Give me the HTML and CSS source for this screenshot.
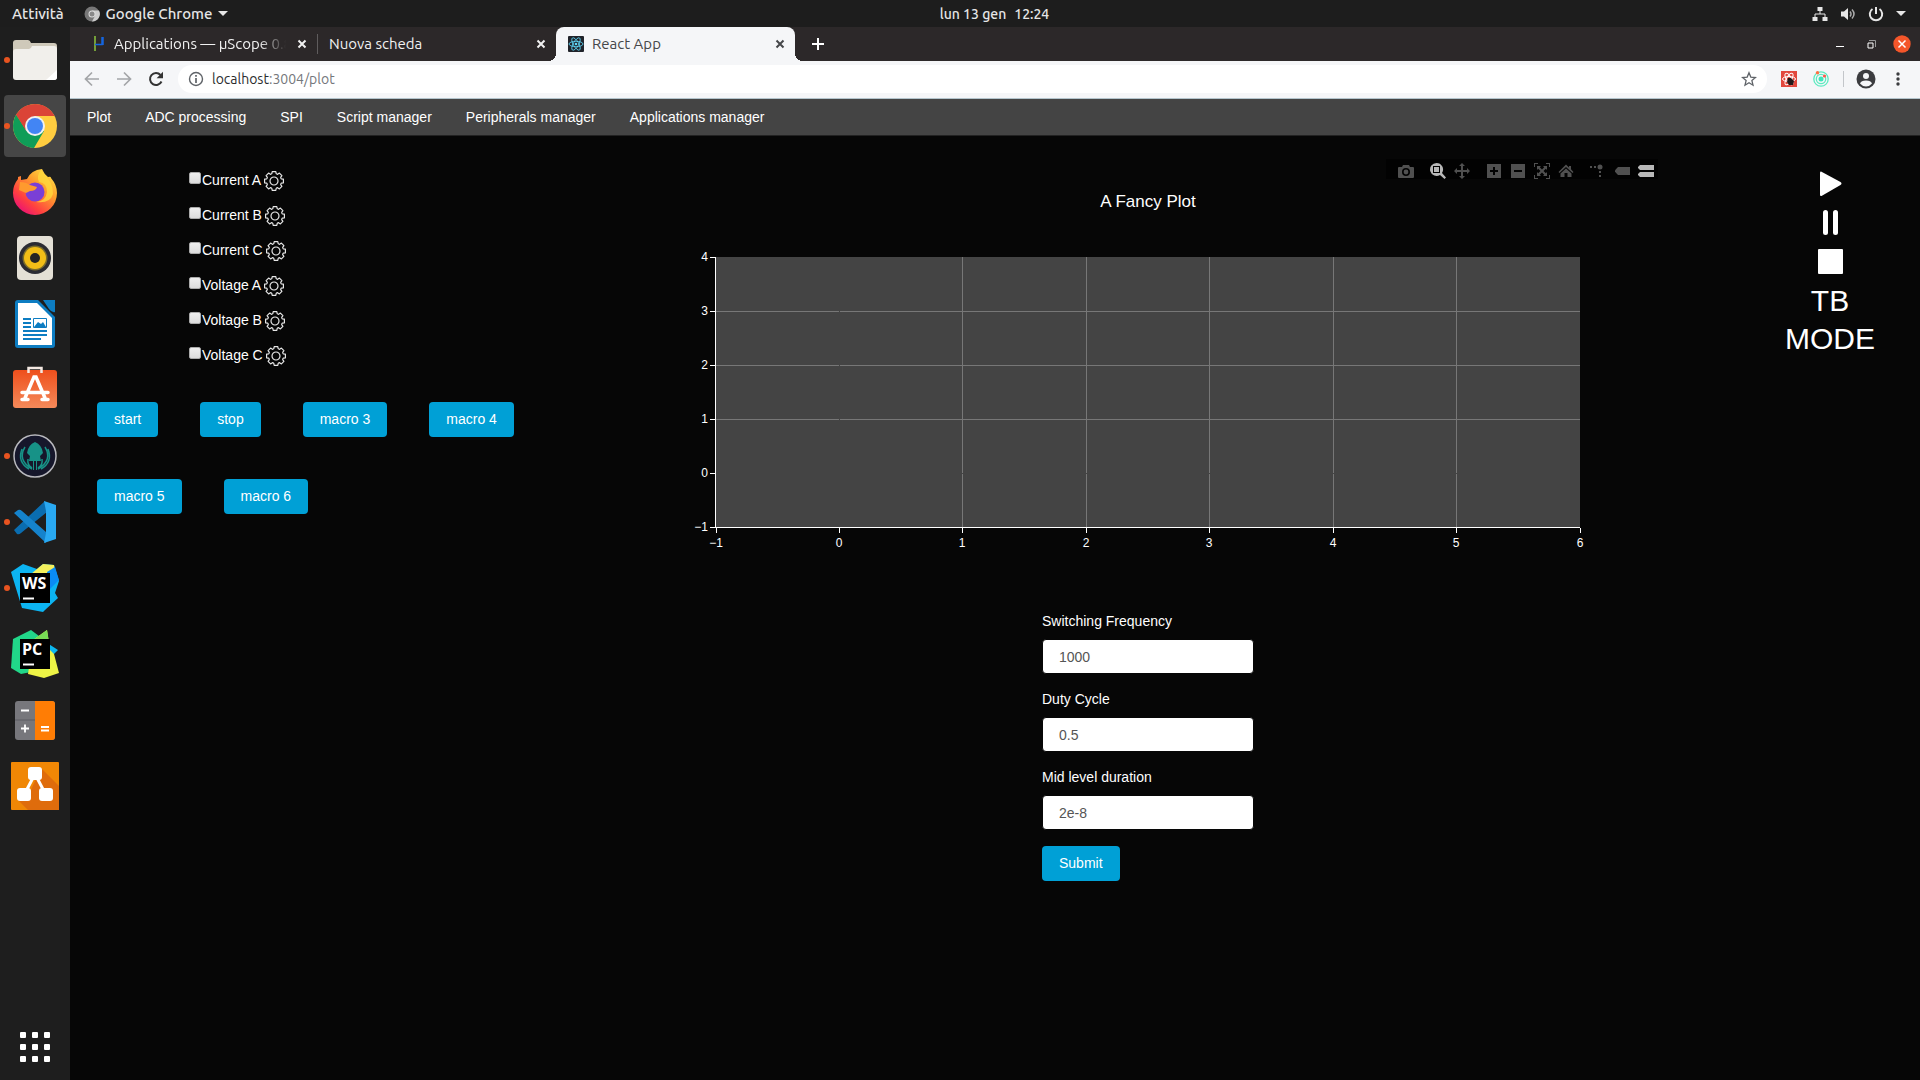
FILE: index.html
```html
<!DOCTYPE html>
<html lang="it">
<head>
<meta charset="utf-8">
<meta name="viewport" content="width=device-width, initial-scale=1">
<title>React App</title>
<link rel="stylesheet" href="styles.css">
</head>
<body>
<svg class="sprite" aria-hidden="true">
  <symbol id="gear" viewBox="-10 -10 20 20">
    <path d="M-1.8-9.4H1.8L2.2-7.3Q2.9-6.6 3.6-6.7L5.4-7.9 7.9-5.4 6.7-3.6Q6.6-2.9 7.3-2.2L9.4-1.8V1.8L7.3 2.2Q6.6 2.9 6.7 3.6L7.9 5.4 5.4 7.9 3.6 6.7Q2.9 6.6 2.2 7.3L1.8 9.4H-1.8L-2.2 7.3Q-2.9 6.6-3.6 6.7L-5.4 7.9-7.9 5.4-6.7 3.6Q-6.6 2.9-7.3 2.2L-9.4 1.8V-1.8L-7.3-2.2Q-6.6-2.9-6.7-3.6L-7.9-5.4-5.4-7.9-3.6-6.7Q-2.9-6.6-2.2-7.3Z"/>
    <circle r="4"/>
  </symbol>
  <symbol id="cross" viewBox="0 0 16 16"><path d="M4.500 4.500l7 7m0-7l-7 7"/></symbol>
</svg>

<header class="topbar">
  <div class="topbar-side">
    <button class="plain">Attività</button>
    <button class="plain app-menu">
      <svg width="16" height="16" viewBox="0 0 16 16"><circle cx="8" cy="8" r="7.500" fill="#777"/><path d="M8 4.500h7A7.500 7.500 0 0 1 8 15.500l3-5.500z" fill="#ccc"/><circle cx="8" cy="8" r="3.500" fill="#ddd"/><circle cx="8" cy="8" r="2.500" fill="#888"/></svg>
      Google Chrome
      <svg width="10" height="6" viewBox="0 0 10 6"><path d="M0 0h10L5 5z" fill="#e6e6e6"/></svg>
    </button>
  </div>
  <button class="plain clock"><span>lun 13 gen</span><span>12:24</span></button>
  <div class="topbar-side tray">
    <svg width="16" height="16" viewBox="0 0 16 16"><path d="M5.500 1h5v4h-5zM.5 11h5v4h-5zM10.500 11h5v4h-5z" fill="#e6e6e6"/><path d="M8 5v3M3 11V8h10v3" fill="none" stroke="#e6e6e6"/></svg>
    <svg width="16" height="16" viewBox="0 0 16 16"><path d="M1 5.500h3L8 2v12L4 10.500H1z" fill="#e6e6e6"/><path d="M10 5.500q2 2.500 0 5M12 3.500q4 4.500 0 9" fill="none" stroke="#aaa" stroke-width="1.500"/></svg>
    <svg width="16" height="16" viewBox="0 0 16 16"><path d="M4.500 3A6.200 6.200 0 1 0 11.500 3M8 1v7" fill="none" stroke="#e6e6e6" stroke-width="2"/></svg>
    <svg width="10" height="6" viewBox="0 0 10 6"><path d="M0 0h10L5 5z" fill="#e6e6e6"/></svg>
  </div>
</header>

<div class="desktop">
  <nav class="dock" aria-label="Dock">
    <button class="dock-item running" aria-label="File">
      <svg width="48" height="48" viewBox="0 0 48 48"><path d="M2 7q0-3 3-3h12q2 0 3 3h23q3 0 3 3v20H2z" fill="#cfc9ba"/><path d="M2 16q0-3 3-3h13q2 0 3-3h22q3 0 3 3v28q0 3-3 3H5q-3 0-3-3z" fill="#f1efeb"/><path d="M46 34v7q0 3-3 3h-8z" fill="#fff"/></svg>
    </button>
    <button class="dock-item running active" aria-label="Google Chrome">
      <svg width="48" height="48" viewBox="0 0 48 48"><circle cx="24" cy="24" r="22" fill="#ffcd40"/><path d="M24 24L5 13A22 22 0 0 1 43.500 14H24z" fill="#db4437"/><path d="M5 13A22 22 0 0 0 23 46l10-17-9-5-9 4z" fill="#0f9d58"/><path d="M5 13l10 16 9-5V14H43.500A22 22 0 0 0 5 13z" fill="#db4437"/><path d="M5 13l10 16 8 5-8-2z" fill="#0f9d58"/><path d="M5 13l10 17-6 6A22 22 0 0 1 5 13z" fill="#0f9d58"/><circle cx="24" cy="24" r="10" fill="#f1f1f1"/><circle cx="24" cy="24" r="8" fill="#4285f4"/></svg>
    </button>
    <button class="dock-item" aria-label="Firefox">
      <svg width="48" height="48" viewBox="0 0 48 48">
        <defs><linearGradient id="fx" x1="1" y1="0" x2=".2" y2="1"><stop offset="0" stop-color="#fff44f"/><stop offset=".4" stop-color="#ffa02c"/><stop offset=".75" stop-color="#ff4040"/><stop offset="1" stop-color="#e80c7c"/></linearGradient></defs>
        <path d="M31 1q2 5 6 8 3-1 3 1 6 7 6 15a22 22 0 0 1-44 0q0-8 5-14v-2l3-1v4l6-1q4-9 15-10z" fill="url(#fx)"/><circle cx="24" cy="24" r="9.500" fill="#7a3fd6"/><path d="M9 14q6 0 10 3l7 2q-1 4-7 4l-4 2-7-3z" fill="#ff9a2e"/><path d="M28 14q8 1 8 10-1 9-11 10 14 2 17-8Q43 15 30 2q-5 6-2 12z" fill="#ffd83c" opacity=".8"/></svg>
    </button>
    <button class="dock-item" aria-label="Rhythmbox">
      <svg width="48" height="48" viewBox="0 0 48 48"><rect x="6" y="2" width="36" height="44" rx="4" fill="#e4e0d6"/><circle cx="24" cy="24" r="16" fill="#2b2b33"/><circle cx="24" cy="24" r="12.500" fill="#7a6c2c"/><circle cx="24" cy="24" r="11" fill="#f2bd17"/><circle cx="24" cy="24" r="5" fill="#242424"/></svg>
    </button>
    <button class="dock-item" aria-label="LibreOffice Writer">
      <svg width="48" height="48" viewBox="0 0 48 48"><path d="M7 0h20l17 17v28q0 3-3 3H7q-3 0-3-3V3q0-3 3-3z" fill="#0d7dc2"/><path d="M7 3h19l15 15v27H7z" fill="#fff"/><path d="M32 0h12v12q-3 1-6-3z" fill="#0d7dc2"/><path d="M12 19h8M12 23h8M12 27h8M12 31h24M12 35h24M12 39h18" stroke="#0d7dc2" stroke-width="2"/><path d="M22.500 18.500h13v9h-13z" fill="#fff" stroke="#0d7dc2"/><path d="M23 27l4-5 3 2 2-2 3 5z" fill="#0d7dc2"/></svg>
    </button>
    <button class="dock-item" aria-label="Ubuntu Software">
      <svg width="48" height="48" viewBox="0 1 48 48"><defs><linearGradient id="sw" x2="0" y2="1"><stop offset="0" stop-color="#ee4f1c"/><stop offset="1" stop-color="#f58a5a"/></linearGradient></defs><rect x="2" y="5" width="44" height="38" rx="3" fill="url(#sw)"/><path d="M17.500 8V3h13v5" fill="none" stroke="#f4e9e2" stroke-width="2.500"/><path d="M14 33L23 12h2l9 21M11 27.500h26M11 34.500h6M31 34.500h6" fill="none" stroke="#fff" stroke-width="3.500" stroke-linecap="round"/></svg>
    </button>
    <button class="dock-item running" aria-label="GitKraken">
      <svg width="48" height="48" viewBox="0 0 48 48"><circle cx="24" cy="24" r="21" fill="#16172b" stroke="#b8b8bd" stroke-width="1.500"/><path d="M24 10q7 3 8 11l-3 3 1 5h-4v9h-1v-9h-2v9h-1v-9h-4l1-5-3-3q1-8 8-11z" fill="#179287"/><path d="M14 15q-8 13 7 22M34 15q8 13-7 22M11 17q-5 13 7 20M37 17q5 13-7 20M17 27q-1 6 4 9M31 27q1 6-4 9" fill="none" stroke="#179287" stroke-width="1.500"/></svg>
    </button>
    <button class="dock-item running" aria-label="Visual Studio Code">
      <svg width="48" height="48" viewBox="0 0 48 48"><path d="M34 3L3 32l3 4q2 1 4-1l26-21z" fill="#0a6db0"/><path d="M3 15l4-3q2-1 4 1l24 21v11z" fill="#1583cc"/><path d="M33 3l12 4v34l-12 4 2-10V13z" fill="#29a9f2"/></svg>
    </button>
    <button class="dock-item running" aria-label="WebStorm">
      <svg width="48" height="48" viewBox="0 0 48 48"><path d="M0 8l12-8 14 5 6-5 11 1 5 16-4 12 3 5-13 12-2 2-21-4z" fill="#0cb4f2"/><path d="M20 10l12-10 11 1 2 14-10 9z" fill="#f4f05c"/><path d="M36 8l8-5 4 13-10 10z" fill="#0a8bf5"/><rect x="9" y="9" width="30" height="30" fill="#000"/><text x="11" y="25" class="ide">WS</text><path d="M12 34.500h11" stroke="#fff" stroke-width="2"/></svg>
    </button>
    <button class="dock-item" aria-label="PyCharm">
      <svg width="48" height="48" viewBox="0 0 48 48"><path d="M2 9L20 0l12 9-2 31-20 4-10-6z" fill="#21d789"/><path d="M30 9l17 11-9 9z" fill="#0cb8f0"/><path d="M22 10l14-10 3 20 4 4 5 19-15 5-16-4z" fill="#eef446"/><path d="M22 10L36 0l2 12z" fill="#78dc55"/><rect x="9" y="9" width="30" height="30" fill="#000"/><text x="11" y="25" class="ide">PC</text><path d="M12 34.500h11" stroke="#fff" stroke-width="2"/></svg>
    </button>
    <button class="dock-item" aria-label="Calcolatrice">
      <svg width="48" height="48" viewBox="0 0 48 48"><rect x="4" y="5" width="40" height="39" rx="3" fill="#77777c"/><path d="M24 5h17q3 0 3 3v33q0 3-3 3H24z" fill="#ff7d05"/><path d="M4 24h20" stroke="#5d5d62"/><path d="M10 14.500h8M10 32.500h8M14 28.500v8M30 31h8M30 34.500h8" stroke="#fff" stroke-width="1.800"/></svg>
    </button>
    <button class="dock-item" aria-label="draw.io">
      <svg width="48" height="48" viewBox="0 0 48 48"><rect width="48" height="48" rx="1" fill="#f08705"/><path d="M30 6l18 18v24H17L7 38l12-8z" fill="#df6c0c"/><path d="M24 12L13 33M24 12l11 21" stroke="#fff" stroke-width="3"/><rect x="17" y="5" width="14" height="13" rx="3" fill="#fff"/><rect x="6" y="26" width="14" height="13" rx="3" fill="#fff"/><rect x="28" y="26" width="14" height="13" rx="3" fill="#fff"/></svg>
    </button>
    <button class="dock-item show-apps" aria-label="Mostra applicazioni">
      <svg width="30" height="30" viewBox="0 0 30 30" fill="#fff"><rect width="6" height="6" rx="1"/><rect x="12" width="6" height="6" rx="1"/><rect x="24" width="6" height="6" rx="1"/><rect y="12" width="6" height="6" rx="1"/><rect x="12" y="12" width="6" height="6" rx="1"/><rect x="24" y="12" width="6" height="6" rx="1"/><rect y="24" width="6" height="6" rx="1"/><rect x="12" y="24" width="6" height="6" rx="1"/><rect x="24" y="24" width="6" height="6" rx="1"/></svg>
    </button>
  </nav>

  <div class="browser">
    <div class="tabstrip">
      <div class="tab">
        <svg width="16" height="16" viewBox="0 0 16 16" fill="none" stroke-width="1.500"><path d="M5 0v15" stroke="#8dc63f"/><path d="M5 8.500h7V1M13 1v8" stroke="#1565e0"/></svg>
        <span class="tab-title fade">Applications — μScope 0.8</span>
        <button class="tab-close" aria-label="Chiudi"><svg width="16" height="16"><use href="#cross"/></svg></button>
      </div>
      <div class="tab divided">
        <span class="tab-title">Nuova scheda</span>
        <button class="tab-close" aria-label="Chiudi"><svg width="16" height="16"><use href="#cross"/></svg></button>
      </div>
      <div class="tab current">
        <svg width="16" height="16" viewBox="0 0 16 16"><rect width="16" height="16" rx="1" fill="#20232a"/><g fill="none" stroke="#61dafb" stroke-width=".8"><ellipse cx="8" cy="8" rx="7" ry="2.700"/><ellipse cx="8" cy="8" rx="7" ry="2.700" transform="rotate(60 8 8)"/><ellipse cx="8" cy="8" rx="7" ry="2.700" transform="rotate(120 8 8)"/></g><circle cx="8" cy="8" r="1.300" fill="#61dafb"/></svg>
        <span class="tab-title">React App</span>
        <button class="tab-close" aria-label="Chiudi"><svg width="16" height="16"><use href="#cross"/></svg></button>
      </div>
      <button class="plain new-tab" aria-label="Nuova scheda"><svg width="16" height="16" viewBox="0 0 16 16"><path d="M8 2v12M2 8h12" stroke="#fff" stroke-width="2"/></svg></button>
      <div class="window-buttons">
        <button class="plain" aria-label="Riduci"><svg width="18" height="18" viewBox="0 0 18 18"><path d="M5 11.500h8" stroke="#fff"/></svg></button>
        <button class="plain" aria-label="Ripristina"><svg width="18" height="18" viewBox="0 0 18 18" fill="none"><path d="M7 5.500h6.500V12" stroke="#999"/><path d="M6 8h5v5H6z" stroke="#fff"/></svg></button>
        <button class="plain" aria-label="Chiudi finestra"><svg width="18" height="18" viewBox="0 0 18 18"><circle cx="9" cy="9" r="8.700" fill="#f4562a"/><path d="M5.500 5.500l7 7m0-7l-7 7" stroke="#fff" stroke-width="1.500"/></svg></button>
      </div>
    </div>

    <div class="toolbar">
      <div class="history">
        <button class="plain" aria-label="Indietro"><svg width="16" height="16" viewBox="0 0 16 16" fill="none" stroke="#a3a5a8" stroke-width="1.700"><path d="M15 8H2M8 1.500L1.500 8 8 14.500"/></svg></button>
        <button class="plain" aria-label="Avanti"><svg width="16" height="16" viewBox="0 0 16 16" fill="none" stroke="#a3a5a8" stroke-width="1.700"><path d="M1 8h13M8 1.500L14.500 8 8 14.500"/></svg></button>
        <button class="plain" aria-label="Ricarica"><svg width="16" height="16" viewBox="0 0 16 16"><path d="M13.500 10.500A6 6 0 1 1 12.500 4" fill="none" stroke="#333" stroke-width="2"/><path d="M15 .8v6.400H8.600z" fill="#333"/></svg></button>
      </div>
      <div class="omnibox">
        <svg width="16" height="16" viewBox="0 0 16 16"><circle cx="8" cy="8" r="6.500" fill="none" stroke="#5f6368" stroke-width="1.400"/><path d="M8 7v5M8 4v1.700" stroke="#5f6368" stroke-width="1.700"/></svg>
        <span class="url">localhost<span class="url-rest">:3004/plot</span></span>
        <svg width="16" height="16" viewBox="0 0 16 16"><path d="M8 1.800l1.800 4.300 4.700.4-3.600 3.100 1.100 4.600L8 11.700l-4 2.500 1.100-4.600L1.500 6.500l4.700-.4z" fill="none" stroke="#5f6368" stroke-width="1.300"/></svg>
      </div>
      <div class="extensions">
        <svg width="16" height="16" viewBox="0 0 16 16"><rect width="16" height="16" fill="#e2483d"/><g fill="none" stroke="#fff"><ellipse cx="8" cy="8" rx="6.500" ry="2.500"/><ellipse cx="8" cy="8" rx="6.500" ry="2.500" transform="rotate(60 8 8)"/><ellipse cx="8" cy="8" rx="6.500" ry="2.500" transform="rotate(120 8 8)"/></g><path d="M7 7l3 0 3 3-1 4H8l-2-3z" fill="#221a1a"/></svg>
        <svg width="16" height="16" viewBox="0 0 16 16"><g fill="none" stroke="#5ceac0" stroke-width="1.300"><circle cx="8" cy="8" r="7.200"/><circle cx="8" cy="8" r="4.700"/></g><circle cx="8" cy="8" r="2.500" fill="#3fe5b8"/><circle cx="4.500" cy="1.700" r="1.700" fill="#ff7043"/><circle cx="11.500" cy="5" r="1.600" fill="#ff5a4a"/></svg>
      </div>
      <div class="profile">
        <svg width="20" height="20" viewBox="0 0 20 20"><circle cx="10" cy="10" r="9.500" fill="#3b3c3f"/><circle cx="10" cy="7" r="3" fill="#f5f6f8"/><path d="M4 14.500q1-3 6-3t6 3q-2.500 3-6 3t-6-3z" fill="#f5f6f8"/></svg>
        <svg width="16" height="16" viewBox="0 0 16 16" fill="#3b3c3f"><circle cx="8" cy="3" r="1.700"/><circle cx="8" cy="8" r="1.700"/><circle cx="8" cy="13" r="1.700"/></svg>
      </div>
    </div>

    <div class="app">
      <nav class="app-nav">
        <a href="#plot">Plot</a>
        <a href="#adc">ADC processing</a>
        <a href="#spi">SPI</a>
        <a href="#scripts">Script manager</a>
        <a href="#peripherals">Peripherals manager</a>
        <a href="#applications">Applications manager</a>
      </nav>

      <main class="panels">
        <section class="controls">
          <ul class="channels">
            <li><input type="checkbox" id="ch1"><label for="ch1">Current A</label><button class="plain" aria-label="Impostazioni Current A"><svg class="gear" width="20" height="20"><use href="#gear"/></svg></button></li>
            <li><input type="checkbox" id="ch2"><label for="ch2">Current B</label><button class="plain" aria-label="Impostazioni Current B"><svg class="gear" width="20" height="20"><use href="#gear"/></svg></button></li>
            <li><input type="checkbox" id="ch3"><label for="ch3">Current C</label><button class="plain" aria-label="Impostazioni Current C"><svg class="gear" width="20" height="20"><use href="#gear"/></svg></button></li>
            <li><input type="checkbox" id="ch4"><label for="ch4">Voltage A</label><button class="plain" aria-label="Impostazioni Voltage A"><svg class="gear" width="20" height="20"><use href="#gear"/></svg></button></li>
            <li><input type="checkbox" id="ch5"><label for="ch5">Voltage B</label><button class="plain" aria-label="Impostazioni Voltage B"><svg class="gear" width="20" height="20"><use href="#gear"/></svg></button></li>
            <li><input type="checkbox" id="ch6"><label for="ch6">Voltage C</label><button class="plain" aria-label="Impostazioni Voltage C"><svg class="gear" width="20" height="20"><use href="#gear"/></svg></button></li>
          </ul>
          <div class="macros">
            <button class="btn">start</button>
            <button class="btn">stop</button>
            <button class="btn">macro 3</button>
            <button class="btn">macro 4</button>
            <button class="btn">macro 5</button>
            <button class="btn">macro 6</button>
          </div>
        </section>

        <section class="center">
          <div class="plot">
            <svg class="chart" viewBox="0 0 1024 450" role="img" aria-label="A Fancy Plot">
              <rect x="80" y="100" width="864" height="270" fill="#444"/>
              <g class="grid">
                <path d="M80 154.500H944M80 208.500H944M80 262.500H944"/>
                <path d="M326.500 100V370M450.500 100V370M573.500 100V370M697.500 100V370M820.500 100V370"/>
              </g>
              <path class="zero" d="M80 316.500H944M203.500 100V370"/>
              <path class="axis" d="M79.500 100V371M79 370.500H944"/>
              <path class="axis" d="M74 100.500h5M74 154.500h5M74 208.500h5M74 262.500h5M74 316.500h5M74 370.500h5"/>
              <path class="axis" d="M80.500 371v5M203.500 371v5M326.500 371v5M450.500 371v5M573.500 371v5M697.500 371v5M820.500 371v5M944.500 371v5"/>
              <g class="ylabels">
                <text x="72" y="104">4</text><text x="72" y="158">3</text><text x="72" y="212">2</text><text x="72" y="266">1</text><text x="72" y="320">0</text><text x="72" y="374">−1</text>
              </g>
              <g class="xlabels">
                <text x="80" y="390">−1</text><text x="203" y="390">0</text><text x="326" y="390">1</text><text x="450" y="390">2</text><text x="573" y="390">3</text><text x="697" y="390">4</text><text x="820" y="390">5</text><text x="944" y="390">6</text>
              </g>
              <text class="title" x="512" y="50">A Fancy Plot</text>
            </svg>
            <div class="modebar">
              <div class="group">
                <button aria-label="Download plot"><svg width="16" height="16" viewBox="0 0 16 16"><path fill-rule="evenodd" d="M0 5q0-1 1-1h3l1-2h6l1 2h3q1 0 1 1v9q0 1-1 1H1q-1 0-1-1zM8 5a4 4 0 1 0 0 8 4 4 0 0 0 0-8zM8 6.600a2.400 2.400 0 1 1 0 4.800 2.400 2.400 0 0 1 0-4.800z"/></svg></button>
              </div>
              <div class="group">
                <button class="on" aria-label="Zoom"><svg width="16" height="16" viewBox="0 0 16 16"><path fill-rule="evenodd" d="M6.500 0a6.500 6.500 0 0 1 5.500 10l4 4.500-1.500 1.500-4.500-4A6.500 6.500 0 1 1 6.500 0zM3 3v7h7V3zM4 4h5v5H4z"/></svg></button>
                <button aria-label="Pan"><svg width="16" height="16" viewBox="0 0 16 16"><path d="M8 0l3 3H9v4h4V5l3 3-3 3V9H9v4h2l-3 3-3-3h2V9H3v2L0 8l3-3v2h4V3H5z"/></svg></button>
              </div>
              <div class="group">
                <button aria-label="Zoom in"><svg width="16" height="16" viewBox="0 0 16 16"><path fill-rule="evenodd" d="M1 1h14v14H1zM7 4v3H4v2h3v3h2V9h3V7H9V4z"/></svg></button>
                <button aria-label="Zoom out"><svg width="16" height="16" viewBox="0 0 16 16"><path fill-rule="evenodd" d="M1 1h14v14H1zM4 7v2h8V7z"/></svg></button>
                <button aria-label="Autoscale"><svg width="16" height="16" viewBox="0 0 16 16"><path d="M0 0h4v1H1v3H0zM12 0h4v4h-1V1h-3zM0 12h1v3h3v1H0zM15 12h1v4h-4v-1h3zM3 3h4L5.800 4.200 8 6.500l2.200-2.300L9 3h4v4l-1.200-1.200L9.500 8l2.300 2.200L13 9v4H9l1.200-1.200L8 9.500l-2.200 2.300L7 13H3V9l1.200 1.200L6.500 8 4.200 5.800 3 7z"/></svg></button>
                <button aria-label="Reset axes"><svg width="16" height="16" viewBox="0 0 16 16"><path d="M8 1.500l3 3V3h2v3.300L15.500 9l-1 1L8 4 1.500 10l-1-1zM8 5.500l5.500 5V14H9.500v-4h-3v4h-4v-3.500z"/></svg></button>
              </div>
              <div class="group">
                <button aria-label="Toggle spike lines"><svg width="16" height="16" viewBox="0 0 16 16"><circle cx="10" cy="4" r="2.500"/><path d="M0 3h2v2H0zM4 3h2v2H4zM9 8h2v2H9zM9 12h2v2H9z"/></svg></button>
                <button aria-label="Show closest data on hover"><svg width="16" height="16" viewBox="0 0 16 16"><path d="M4 4h12v8H4L1 8.800V7.200z"/></svg></button>
                <button class="on" aria-label="Compare data on hover"><svg width="16" height="16" viewBox="0 0 16 16"><path d="M2 2h14v5H2L0 5V4zM2 9h14v5H2l-2-2v-1z"/></svg></button>
              </div>
            </div>
          </div>
          <form class="params">
            <label for="freq">Switching Frequency</label>
            <input type="text" id="freq" value="1000">
            <label for="duty">Duty Cycle</label>
            <input type="text" id="duty" value="0.5">
            <label for="mid">Mid level duration</label>
            <input type="text" id="mid" value="2e-8">
            <button type="button" class="btn">Submit</button>
          </form>
        </section>

        <section class="transport">
          <button class="plain" aria-label="Play"><svg width="26" height="26" viewBox="0 0 26 26"><path d="M3 2q0-1.700 1.500-1.300L23.500 11q2 1.500 0 3L4.500 25Q3 25.300 3 24z" fill="#fff"/></svg></button>
          <button class="plain" aria-label="Pause"><svg width="26" height="26" viewBox="0 0 26 26" fill="#fff"><rect x="6" y="0" width="5" height="25" rx="2.500"/><rect x="16" y="0" width="5" height="25" rx="2.500"/></svg></button>
          <button class="plain" aria-label="Stop"><svg width="26" height="26" viewBox="0 0 26 26"><rect x="1" width="25" height="25" rx="1" fill="#fff"/></svg></button>
          <button class="plain mode">TB MODE</button>
        </section>
      </main>
    </div>
  </div>
</div>
</body>
</html>
```
FILE: styles.css
```css
* { box-sizing: border-box; }

body {
  margin: 0;
  min-height: 100vh;
  display: flex;
  flex-direction: column;
  background: #060606;
  color: #fff;
  font: 14px/18px "Liberation Sans", Arial, sans-serif;
}

svg { display: block; flex: none; }
.sprite { position: absolute; width: 0; height: 0; }

button { font: inherit; color: inherit; cursor: pointer; }

.plain {
  display: flex;
  align-items: center;
  padding: 0;
  border: 0;
  background: none;
}

/* Desktop top bar */
.topbar {
  display: flex;
  align-items: center;
  height: 27px;
  padding: 0 14px 0 12px;
  background: #1d1d1d;
  color: #e6e6e6;
  font: 500 15px/20px Ubuntu, "Noto Sans", sans-serif;
}
.topbar-side { flex: 1; display: flex; align-items: center; gap: 20px; }
.app-menu { gap: 6px; }
.clock { gap: 8px; margin-left: 71px; font-size: 14px; }
.tray { justify-content: flex-end; gap: 12px; }

.desktop { flex: 1; display: flex; }

/* Dock */
.dock {
  flex: none;
  width: 70px;
  display: flex;
  flex-direction: column;
  align-items: center;
  gap: 4px;
  padding: 2px 0;
  background: #1e1e1e;
}
.dock-item {
  position: relative;
  display: grid;
  place-items: center;
  width: 62px;
  height: 62px;
  padding: 0;
  border: 0;
  border-radius: 4px;
  background: none;
}
.dock-item.active { background: #464646; }
.dock-item.running::before {
  content: "";
  position: absolute;
  left: 0;
  top: 28px;
  width: 6px;
  height: 6px;
  border-radius: 50%;
  background: #e95420;
}
.show-apps { margin-top: auto; }
.ide { font: bold 16px "Open Sans", sans-serif; fill: #fff; }

/* Browser chrome */
.browser { flex: 1; min-width: 0; display: flex; flex-direction: column; }

.tabstrip {
  display: flex;
  height: 34px;
  padding: 0 9px 0 8px;
  background: #2c2829;
  color: #f1f1f1;
  font: 15px/20px Ubuntu, "Noto Sans", sans-serif;
}
.tab {
  position: relative;
  display: flex;
  align-items: center;
  gap: 8px;
  width: 239px;
  padding: 0 7px 0 12px;
}
.tab.divided::before {
  content: "";
  position: absolute;
  left: 0;
  top: 7px;
  width: 1px;
  height: 20px;
  background: #5f5c5d;
}
.tab.current {
  background: #f5f6f8;
  color: #45474a;
  border-radius: 8px 8px 0 0;
}
.tab.current::before,
.tab.current::after {
  content: "";
  position: absolute;
  bottom: 0;
  width: 8px;
  height: 8px;
}
.tab.current::before { right: 100%; background: radial-gradient(circle at 0 0, transparent 8px, #f5f6f8 8px); }
.tab.current::after { left: 100%; background: radial-gradient(circle at 100% 0, transparent 8px, #f5f6f8 8px); }
.tab-title { flex: 1; min-width: 0; overflow: hidden; white-space: nowrap; }
.tab-title.fade { mask-image: linear-gradient(to right, #000 145px, transparent); }
.tab-close { padding: 0; border: 0; background: none; stroke: currentColor; stroke-width: 2; }
.new-tab { margin-left: 15px; }
.window-buttons { display: flex; gap: 13px; margin-left: auto; }

.toolbar {
  display: flex;
  align-items: center;
  height: 38px;
  padding: 0 14px 1px;
  border-bottom: 1px solid #b3c4cc;
  background: #f5f6f8;
}
.history { display: flex; gap: 16px; margin-right: 14px; }
.omnibox {
  flex: 1;
  display: flex;
  align-items: center;
  gap: 8px;
  height: 28px;
  padding: 0 10px;
  border-radius: 14px;
  background: #fff;
  color: #2b2c2e;
  font: 14px/20px Ubuntu, "Noto Sans", sans-serif;
}
.url { flex: 1; }
.url-rest { color: #74777b; }
.extensions {
  display: flex;
  gap: 16px;
  margin-left: 14px;
  padding-right: 14px;
  border-right: 1px solid #c3c6ca;
}
.profile { display: flex; align-items: center; gap: 14px; padding-left: 12px; }

/* Application */
.app { flex: 1; background: #060606; }
.app-nav {
  display: flex;
  align-items: center;
  gap: 34px;
  height: 37px;
  padding: 0 17px;
  border-bottom: 1px solid #222;
  background: #444;
}
.app-nav a { color: #fff; text-decoration: none; }

.panels {
  display: grid;
  grid-template-columns: 486px 1fr 180px;
  align-items: start;
}

.controls { padding: 35px 27px 0; }
.channels {
  display: flex;
  flex-direction: column;
  gap: 15px;
  margin: 0 0 36px;
  padding: 0 0 0 92px;
  list-style: none;
}
.channels li { display: flex; align-items: flex-start; height: 20px; }
.channels input {
  appearance: none;
  width: 12px;
  height: 12px;
  margin: 1px 1px 0 0;
  border: 1px solid #aaa;
  border-radius: 2px;
  background: linear-gradient(#eee, #dcdcdc);
}
.channels button { margin-left: 3px; }
.gear { fill: none; stroke: #e6e6e6; stroke-width: 1.2; stroke-linejoin: round; }

.macros { display: flex; flex-wrap: wrap; gap: 42px; }
.btn {
  height: 35px;
  padding: 0 17px 2px;
  border: 0;
  border-radius: 4px;
  background: #00a0d6;
  color: #fff;
}

.center {
  display: flex;
  flex-direction: column;
  align-items: center;
  gap: 5px;
  padding-top: 21px;
}
.plot { position: relative; width: 100%; max-width: 1024px; }
.chart { width: 100%; }
.chart text { font-family: "Liberation Sans", Arial, sans-serif; font-size: 12px; fill: #fff; }
.chart .title { font-size: 17px; text-anchor: middle; }
.grid { stroke: #777; fill: none; }
.zero { stroke: #444; fill: none; }
.axis { stroke: #fff; fill: none; }
.ylabels { text-anchor: end; }
.xlabels { text-anchor: middle; }

.modebar {
  position: absolute;
  top: 2px;
  right: 2px;
  display: flex;
  background: #020202;
}
.group { display: flex; padding-left: 8px; }
.modebar button {
  width: 24px;
  padding: 4px 4px 0;
  border: 0;
  background: none;
  fill: #505050;
}
.modebar .on { fill: #b8b8b8; }

.params { display: flex; flex-direction: column; width: 212px; }
.params label { margin-bottom: 9px; }
.params input {
  height: 35px;
  margin: 0 0 16px;
  padding: 0 16px;
  border: 1px solid #060606;
  border-radius: 4px;
  background: #fff;
  color: #555;
  font: inherit;
}
.params .btn { align-self: flex-start; }

.transport {
  display: flex;
  flex-direction: column;
  align-items: center;
  gap: 13px;
  padding-top: 35px;
}
.mode {
  max-width: 90px;
  margin-top: -6px;
  justify-content: center;
  text-align: center;
  font-size: 30px;
  line-height: 38px;
}
```
